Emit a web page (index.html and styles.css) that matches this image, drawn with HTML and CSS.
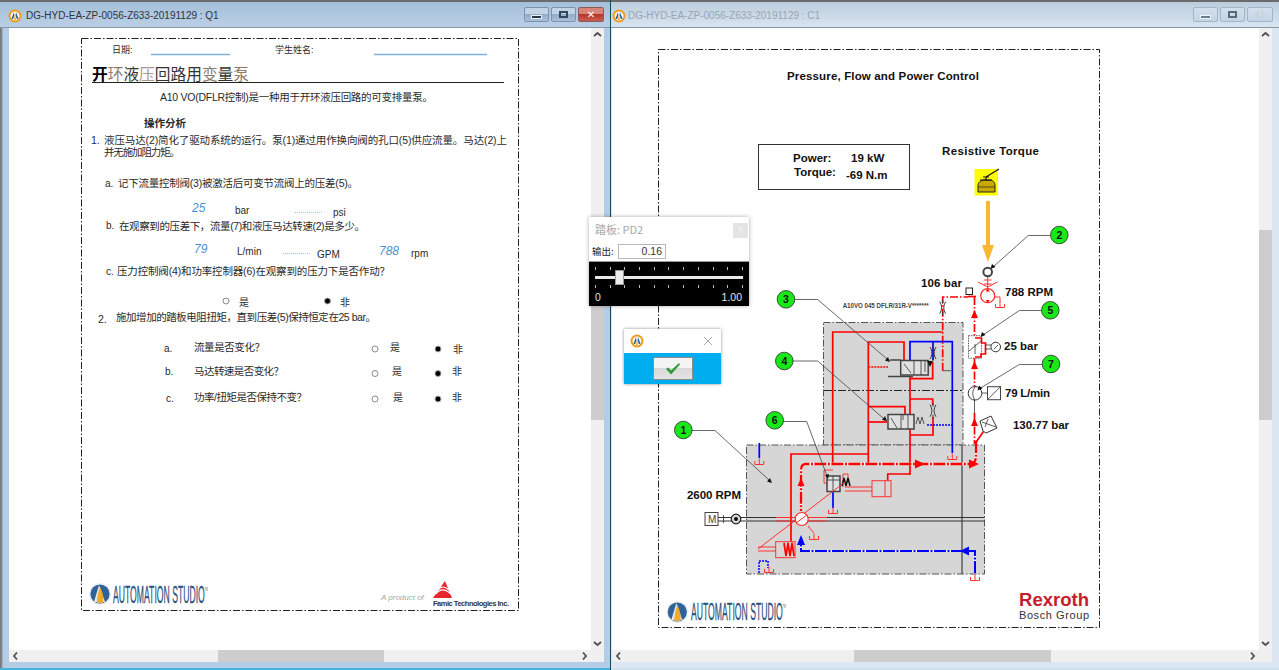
FILE: index.html
```html
<!DOCTYPE html>
<html lang="zh">
<head>
<meta charset="utf-8">
<title>Automation Studio</title>
<link rel="stylesheet" href="styles.css">
</head>
<body>
<svg class="defs" width="0" height="0" aria-hidden="true">
  <defs>
    <g id="app-icon">
      <circle r="5.5" class="ai-ring"/>
      <path d="M-1 -4 L-3.6 3 H-1.8 L-.6 -.5 Z" class="ai-blue"/>
      <path d="M1 -4 L3.6 3 H1.8 L.6 -.5 Z" class="ai-blue"/>
      <path d="M0 -2 L1 4 H-1 Z" class="ai-gold"/>
    </g>
    <g id="as-mark">
      <circle r="11" class="am-halo"/>
      <circle r="9.6" class="am-blue"/>
      <path d="M-1 -9 L-6 8 H-2.4 L-.4 1 L1.2 8 H5 Z" class="am-white"/>
      <path d="M0 -7 C3 -1 4 4 3 9 H-3 C-3 4 -2 -1 0 -7 Z" class="am-gold"/>
    </g>
    <path id="tank" d="M-4.5 0V3.5H4.5V0M0 -2.5V3.5" class="tank"/>
    <g id="orifice" class="orif"><path d="M-3 -6 C-.5 -2 -.5 2 -3 6M3 -6 C.5 -2 .5 2 3 6M0 -4V-8M0 4V8"/></g>
    <g id="up" class="arrow-red"><path d="M0 -5 L3.5 3 H-3.5 Z"/></g>
  </defs>
</svg>

<main class="desktop">
  <section class="window window-active">
    <header class="titlebar">
      <svg class="app-icon" width="14" height="14" viewBox="-7 -7 14 14"><use href="#app-icon"/></svg>
      <h1 class="title">DG-HYD-EA-ZP-0056-Z633-20191129 : Q1</h1>
      <div class="caption">
        <button class="cap cap-min" aria-label="最小化"><i></i></button>
        <button class="cap cap-max" aria-label="最大化"><i></i></button>
        <button class="cap cap-close" aria-label="关闭">✕</button>
      </div>
    </header>
    <div class="client">
      <div class="canvas">
        <svg width="582" height="622" viewBox="9 28 582 622">
          <rect x="81.5" y="38.5" width="437" height="572" class="sheet-edge"/>
          <text x="112" y="53" class="t9">日期:</text>
          <line x1="151" y1="54.5" x2="230" y2="54.5" class="blank"/>
          <text x="275" y="53" class="t9">学生姓名:</text>
          <line x1="374" y1="54.5" x2="487" y2="54.5" class="blank"/>
          <text x="92" y="80" class="doc-title" textLength="157"><tspan class="c1">开</tspan><tspan class="c2">环</tspan><tspan class="c3">液</tspan><tspan class="c4">压</tspan><tspan class="c3">回路用</tspan><tspan class="c2">变</tspan><tspan class="c3">量</tspan><tspan class="c2">泵</tspan></text>
          <line x1="92" y1="82.5" x2="504" y2="82.5" class="rule"/>
          <text x="160" y="101" class="t11" textLength="273">A10 VO(DFLR控制)是一种用于开环液压回路的可变排量泵。</text>
          <text x="144" y="127" class="t-bold" textLength="42">操作分析</text>
          <text x="91" y="144" class="t11 navy">1.</text>
          <text x="104" y="144" class="t11" textLength="403">液压马达(2)简化了驱动系统的运行。泵(1)通过用作换向阀的孔口(5)供应流量。马达(2)上</text>
          <text x="104" y="156" class="t11" textLength="76">并无施加阻力矩。</text>
          <text x="105" y="187" class="t10">a.</text>
          <text x="118" y="187" class="t11" textLength="240">记下流量控制阀(3)被激活后可变节流阀上的压差(5)。</text>
          <text x="192" y="212" class="answer">25</text>
          <text x="235" y="214" class="t10">bar</text>
          <line x1="295" y1="212.5" x2="322" y2="212.5" class="dots"/>
          <text x="333" y="216" class="t10">psi</text>
          <text x="106" y="229" class="t10">b.</text>
          <text x="119" y="230" class="t11" textLength="246">在观察到的压差下，流量(7)和液压马达转速(2)是多少。</text>
          <text x="194" y="253" class="answer">79</text>
          <text x="237" y="255" class="t10">L/min</text>
          <line x1="283" y1="253.5" x2="310" y2="253.5" class="dots"/>
          <text x="317" y="258" class="t10">GPM</text>
          <text x="379" y="255" class="answer">788</text>
          <text x="411" y="257" class="t10">rpm</text>
          <text x="106" y="275" class="t10">c.</text>
          <text x="117" y="275" class="t11" textLength="273">压力控制阀(4)和功率控制器(6)在观察到的压力下是否作动？</text>
          <circle cx="226" cy="301" r="3" class="radio"/>
          <text x="239" y="306" class="t10">是</text>
          <circle cx="327.500" cy="301" r="3" class="radio-on"/>
          <text x="340" y="306" class="t10">非</text>
          <text x="98" y="323" class="t11">2.</text>
          <text x="116" y="321" class="t11" textLength="260">施加增加的踏板电阻扭矩，直到压差(5)保持恒定在25 bar。</text>
          <text x="164" y="352" class="t10">a.</text>
          <text x="194" y="351" class="t11" textLength="71">流量是否变化？</text>
          <circle cx="375" cy="349" r="3" class="radio"/>
          <text x="390" y="351" class="t10">是</text>
          <circle cx="438" cy="349" r="3" class="radio-on"/>
          <text x="453" y="353" class="t10">非</text>
          <text x="165" y="375" class="t10">b.</text>
          <text x="194" y="375" class="t11" textLength="90">马达转速是否变化？</text>
          <circle cx="375" cy="373.500" r="3" class="radio"/>
          <text x="392" y="375" class="t10">是</text>
          <circle cx="438" cy="373.500" r="3" class="radio-on"/>
          <text x="452" y="375" class="t10">非</text>
          <text x="166" y="402" class="t10">c.</text>
          <text x="194" y="401" class="t11" textLength="113">功率/扭矩是否保持不变？</text>
          <circle cx="375" cy="399" r="3" class="radio"/>
          <text x="393" y="401" class="t10">是</text>
          <circle cx="438" cy="399" r="3" class="radio-on"/>
          <text x="452" y="401" class="t10">非</text>
          <use href="#as-mark" x="100" y="594"/>
          <text x="113" y="603" class="as-word" textLength="95" lengthAdjust="spacingAndGlyphs">AUTOMATION STUDIO<tspan class="tm" dy="-12">TM</tspan></text>
          <text x="381" y="600" class="product">A product of</text>
          <path d="M445 581 L452 598 H433 Z" class="famic"/>
          <path d="M436 594 C440 588 446 589 451 594M438 590 C441 586 445 586 449 590" class="famic-cut"/>
          <text x="433" y="606" class="famic-word" textLength="76">Famic Technologies Inc.</text>
        </svg>
      </div>
      <div class="vscroll">
        <svg class="chev" width="13" height="13" viewBox="0 0 13 13"><path d="M3 8 L6.500 5 L10 8"/></svg>
        <div class="vtrack"><div class="vthumb vthumb-left"></div></div>
        <svg class="chev" width="13" height="13" viewBox="0 0 13 13"><path d="M3 5 L6.500 8 L10 5"/></svg>
      </div>
      <div class="hscroll">
        <svg class="chev" width="13" height="12" viewBox="0 0 13 12"><path d="M8 2.500 L5 6 L8 9.500"/></svg>
        <div class="htrack"><div class="hthumb hthumb-left"></div></div>
        <svg class="chev" width="13" height="12" viewBox="0 0 13 12"><path d="M5 2.500 L8 6 L5 9.500"/></svg>
      </div>
      <div class="corner"></div>
    </div>
  </section>

  <section class="window window-idle">
    <header class="titlebar">
      <svg class="app-icon" width="14" height="14" viewBox="-7 -7 14 14"><use href="#app-icon"/></svg>
      <h1 class="title">DG-HYD-EA-ZP-0056-Z633-20191129 : C1</h1>
      <div class="caption">
        <button class="cap cap-min" aria-label="最小化"><i></i></button>
        <button class="cap cap-max" aria-label="最大化"><i></i></button>
        <button class="cap cap-close" aria-label="关闭">✕</button>
      </div>
    </header>
    <div class="client">
      <div class="canvas">
        <svg width="647" height="622" viewBox="612 28 647 622">
          <rect x="658.500" y="49.500" width="441" height="578" class="sheet-edge"/>
          <text x="787" y="80" class="h-title" textLength="192">Pressure, Flow and Power Control</text>
          <rect x="758.500" y="144.500" width="151" height="45" class="info"/>
          <text x="793" y="162" class="lbl">Power:</text>
          <text x="851" y="162" class="lbl">19 kW</text>
          <text x="794" y="176" class="lbl">Torque:</text>
          <text x="846" y="179" class="lbl">-69 N.m</text>
          <text x="942" y="155" class="lbl" textLength="97">Resistive Torque</text>
          <!-- resistive torque actuator -->
          <rect x="974.500" y="169" width="23.500" height="26.500" class="yellow"/>
          <path d="M978 192 V186 C978 182 981 180 985 180 H989 C993 180 995 182 995 186 V192 Z" class="hull"/>
          <path d="M978 187 H995" class="thin-k"/>
          <path d="M980 180 H992M986 180 V177M983 177 H989M986 177 L999 169" class="lever"/>
          <!-- load arrow -->
          <path d="M986 201 H990 V245 H994 L988 262 L982 245 H986 Z" class="load"/>

          <!-- housings -->
          <rect x="823.500" y="322.500" width="139.500" height="122.500" class="block"/>
          <rect x="746.500" y="445" width="238" height="129" class="block"/>
          <line x1="824" y1="390.500" x2="963" y2="390.500" class="pilot"/>
          <line x1="962" y1="445" x2="962" y2="574" class="bar"/>
          <path d="M718 517.500 H984.500M718 521 H984.500" class="shaft"/>

          <!-- pressure lines -->
          <path d="M832.700 463 V332 H942.700" class="r2"/>
          <path d="M868.300 463 V342 H904 V360" class="r2"/>
          <path d="M868.300 406.700 H905 V414" class="r2"/>
          <path d="M868.300 422 H887" class="r2"/>
          <path d="M868.300 367 H888" class="r-dash"/>
          <path d="M910 475 V377" class="r2"/>
          <path d="M910 378.700 H932.700 V362" class="r2"/>
          <path d="M910 399 H932.700 V405" class="r2"/>
          <path d="M910 435 H933 V417" class="r2"/>
          <path d="M887.700 481 V474 H910" class="r2"/>
          <path d="M791 541.700 V454 H869" class="r2"/>
          <path d="M942.700 370.700 V297 H968" class="r-long"/>
          <path d="M942.700 370.700 H951" class="thin-k"/>
          <path d="M976 441 V453 C976 461 975 464 970 464 H806 C802 464 801 466 801 470 V511" class="r-main-under"/>
          <path d="M976 441 V453 C976 461 975 464 970 464 H806 C802 464 801 466 801 470 V511" class="r-main"/>
          <path d="M974.500 297 V336M974.500 358 V386" class="r-long"/>
          <path d="M974.500 413 V444" class="r-long"/>
          <path d="M974.500 400 V413" class="thin-k"/>
          <path d="M968 296.500 H976" class="r2"/>

          <!-- return lines -->
          <path d="M910 360 V341.700 H952.300 V453" class="b2"/>
          <path d="M933 360 V341.700" class="b2"/>
          <path d="M927 425 H952" class="b-dash"/>
          <path d="M833 491.700 V508" class="b2"/>
          <path d="M759.300 443 V458" class="b2"/>
          <path d="M759 573 V561 H768 V568" class="b-dash"/>
          <path d="M975 573 V551 H801 V537" class="b-main-under"/>
          <path d="M975 573 V551 H801 V537" class="b-main"/>

          <!-- tanks -->
          <use href="#tank" x="952.300" y="456"/>
          <use href="#tank" x="759.300" y="461"/>
          <use href="#tank" x="833" y="510"/>
          <use href="#tank" x="814" y="536"/>
          <use href="#tank" x="769" y="569"/>
          <use href="#tank" x="975" y="577"/>

          <!-- arrows on lines -->
          <path d="M925 464 L915 459.500 V468.500 Z" class="fill-red"/>
          <path d="M979 464 L969 459.500 V468.500 Z" class="fill-red"/>
          <use href="#up" x="801" y="483"/>
          <use href="#up" x="974.500" y="315"/>
          <use href="#up" x="974.500" y="366"/>
          <use href="#up" x="974.500" y="423"/>
          <path d="M801 535 L797 545 H805 Z" class="fill-blue"/>
          <path d="M960 551 L969 546.500 V555.500 Z" class="fill-blue"/>

          <!-- valve 3 -->
          <rect x="900.700" y="360.500" width="27.500" height="14.500" class="valve"/>
          <path d="M914 360.500 V375M921 360.500 V375M904 364 L911 373M925 361 V372" class="thin-k"/>
          <path d="M890 360 H901M888 376.500 H913" class="valve-rod"/>
          <path d="M927 361 L933 361 L930 367 Z" class="fill-k"/>
          <!-- valve 4 -->
          <rect x="888" y="414.500" width="26" height="14.500" class="valve"/>
          <path d="M901 414.500 V429M908 414.500 V429M891 418 L897 428M903 415 V420" class="thin-k"/>
          <path d="M916 424 L918 417 L920 424 L922 417 L924 424" class="thin-k"/>
          <!-- orifices -->
          <use href="#orifice" x="942.700" y="307.700"/>
          <use href="#orifice" x="933" y="353"/>
          <use href="#orifice" x="933" y="410.700"/>
          <!-- control 6 -->
          <path d="M833 470 H824 V483 H828" class="r1"/>
          <rect x="827" y="476" width="13" height="15.500" class="valve"/>
          <path d="M833 476 V491.500M827 480 H840" class="thin-k"/>
          <path d="M843 487 V474 H848 V482" class="r1"/>
          <path d="M842 486 L844 478 L846 486 L848 478 L850 486" class="thick-k"/>
          <!-- actuators -->
          <path d="M845 487 H872M845 491 H872" class="r1"/>
          <rect x="872" y="480.700" width="19" height="16" class="r-box"/>
          <path d="M885 480.700 V496.700" class="r1"/>
          <path d="M758 547 H776M758 551 H776" class="r1"/>
          <rect x="775.700" y="541.700" width="19.300" height="16" class="r-box"/>
          <path d="M784 543 L786 556 L788 543 L790 556 L792 543 L794 556" class="r2"/>
          <path d="M758 549 L845 482" class="r1"/>
          <!-- pump and drive -->
          <path d="M776 517.500 H827M776 521 H827" class="r1"/>
          <circle cx="801.700" cy="519" r="6.500" class="pump"/>
          <path d="M796 523 L807 515" class="r1"/>
          <path d="M808 526 L814 533" class="r1"/>
          <rect x="705" y="512.500" width="13" height="13" class="motor"/>
          <text x="708" y="523" class="m-letter">M</text>
          <circle cx="736" cy="519" r="4.800" class="coupling"/>
          <circle cx="736" cy="519" r="2" class="fill-k"/>
          <path d="M723.500 515 V523" class="thin-k"/>
          <!-- output motor -->
          <path d="M987.700 277 V289M984 280 H991.500M984 284 H991.500" class="r1"/>
          <path d="M978 282 L987.700 287 L997.500 282" class="r1"/>
          <circle cx="987.700" cy="295.700" r="7" class="pump"/>
          <path d="M987.700 288.500 l-2 3 h4 Z M987.700 303 l-2 -3 h4 Z" class="fill-red"/>
          <path d="M994.700 297 H1000 V302" class="r1"/>
          <use href="#tank" x="1000" y="304"/>
          <circle cx="987.700" cy="272" r="4.300" class="sensor"/>
          <rect x="966" y="288" width="6.500" height="6.500" class="small-box"/>
          <!-- flow sensor 7 -->
          <circle cx="975" cy="393.300" r="6.800" class="pump-k"/>
          <path d="M975 387 C972 391 972 396 975 400" class="thin-k"/>
          <path d="M982 393 H987.500" class="thin-k"/>
          <rect x="987.500" y="386.700" width="13" height="13" class="motor"/>
          <path d="M987.500 399.700 L1000.500 386.700" class="thin-k"/>
          <!-- pressure sensor 5 -->
          <rect x="968.500" y="335.700" width="13" height="22.500" class="dotted-box"/>
          <path d="M975 338 H981.500 V343 H985.500 V354 H981 V357 H975" class="r2"/>
          <path d="M969 351 L981 341M975 344 V354" class="thin-k"/>
          <path d="M985 345 H991M985 349 H991" class="thin-k"/>
          <circle cx="995.700" cy="347" r="4.800" class="pump-k"/>
          <path d="M994 349 L998 345" class="thin-k"/>
          <!-- load relief -->
          <path d="M983 431 L980 421 L991 416 L997 428 L986 433 Z" class="relief"/>
          <path d="M982 422 L996 427M988 419 L985 427" class="thin-k"/>
          <path d="M983.300 431.700 L975.500 443" class="r2"/>
          <!-- leaders -->
          <path d="M692 430.500 H715 L769 480" class="leader"/>
          <path d="M1050 235.500 H1028.300 L993 267" class="leader"/>
          <path d="M795 299.500 H817.700 L887 359" class="leader"/>
          <path d="M793 361 H817.700 L883 418" class="leader"/>
          <path d="M1041 310.500 H1019.300 L983 335" class="leader"/>
          <path d="M783 421.500 H806.700 L827 476" class="leader"/>
          <path d="M1042 364.500 H1019.300 L979 389" class="leader"/>
          <path d="M772 483 l-5 -1.500 l3 -3.500 Z M990.500 269 l1.500 -5 l3.500 3 Z M890 362 l-5 -1.500 l3 -3.500 Z M887 421 l-5 -1 l3 -4 Z M980.500 337 l1.500 -5 l3.500 3 Z M828 479 l-3 -4 l4 -1 Z M977.500 390.500 l1.500 -5 l3.500 3 Z" class="fill-k"/>

          <g class="bubble">
            <circle cx="683.300" cy="430" r="8.800"/><circle cx="1059.300" cy="235" r="8.800"/><circle cx="786" cy="299.300" r="8.800"/><circle cx="784.300" cy="361" r="8.800"/><circle cx="1050.300" cy="310.300" r="8.800"/><circle cx="774.700" cy="420.300" r="8.800"/><circle cx="1051" cy="364" r="8.800"/>
          </g>
          <text x="683.300" y="434" class="bub-n">1</text>
          <text x="1059.300" y="239" class="bub-n">2</text>
          <text x="786" y="303.300" class="bub-n">3</text>
          <text x="784.300" y="365" class="bub-n">4</text>
          <text x="1050.300" y="314.300" class="bub-n">5</text>
          <text x="774.700" y="424.300" class="bub-n">6</text>
          <text x="1051" y="368" class="bub-n">7</text>

          <text x="842.700" y="308" class="model" textLength="86" lengthAdjust="spacingAndGlyphs">A10VO 045 DFLR/31R-V*******</text>
          <text x="921" y="287" class="lbl" textLength="41">106 bar</text>
          <text x="1005" y="296" class="lbl" textLength="48">788 RPM</text>
          <text x="1004" y="350" class="lbl" textLength="34">25 bar</text>
          <text x="1005" y="397" class="lbl" textLength="45">79 L/min</text>
          <text x="1013" y="429" class="lbl" textLength="56">130.77 bar</text>
          <text x="687" y="499" class="lbl" textLength="54">2600 RPM</text>

          <use href="#as-mark" x="677.300" y="612"/>
          <text x="691" y="620" class="as-word" textLength="95" lengthAdjust="spacingAndGlyphs">AUTOMATION STUDIO<tspan class="tm" dy="-12">TM</tspan></text>
          <text x="1019" y="606" class="rexroth" textLength="70" lengthAdjust="spacingAndGlyphs">Rexroth</text>
          <text x="1019" y="619" class="bosch" textLength="70">Bosch Group</text>
        </svg>
      </div>
      <div class="vscroll">
        <svg class="chev" width="13" height="13" viewBox="0 0 13 13"><path d="M3 8 L6.500 5 L10 8"/></svg>
        <div class="vtrack"><div class="vthumb vthumb-right"></div></div>
        <svg class="chev" width="13" height="13" viewBox="0 0 13 13"><path d="M3 5 L6.500 8 L10 5"/></svg>
      </div>
      <div class="hscroll">
        <svg class="chev" width="13" height="12" viewBox="0 0 13 12"><path d="M8 2.500 L5 6 L8 9.500"/></svg>
        <div class="htrack"><div class="hthumb hthumb-right"></div></div>
        <svg class="chev" width="13" height="12" viewBox="0 0 13 12"><path d="M5 2.500 L8 6 L5 9.500"/></svg>
      </div>
      <div class="corner"></div>
    </div>
  </section>

  <aside class="pedal">
    <div class="pedal-head">
      <span class="pedal-title">踏板: PD2</span>
      <span class="pedal-close">x</span>
    </div>
    <div class="pedal-value">
      <label class="pedal-label">输出:</label>
      <output class="pedal-input">0.16</output>
    </div>
    <div class="pedal-slider">
      <div class="ticks"><i></i><i></i><i></i><i></i><i></i><i></i><i></i><i></i><i></i><i></i><i></i></div>
      <div class="track"><div class="thumb"></div></div>
      <div class="ticks"><i></i><i></i><i></i><i></i><i></i><i></i><i></i><i></i><i></i><i></i><i></i></div>
      <div class="scale"><span class="scale-min">0</span><span>1.00</span></div>
    </div>
  </aside>

  <aside class="confirm">
    <div class="confirm-head">
      <svg width="14" height="14" viewBox="-7 -7 14 14"><use href="#app-icon"/></svg>
      <svg class="confirm-x" width="10" height="10" viewBox="0 0 10 10"><path d="M1 1 L9 9M9 1 L1 9"/></svg>
    </div>
    <div class="confirm-body">
      <button class="ok" aria-label="确定">
        <svg width="16" height="13" viewBox="0 0 16 13"><path d="M1 7 L3.500 5.500 L6 8.500 L14 1 L15 2.500 L6 12.500 Z"/></svg>
      </button>
    </div>
  </aside>
</main>
</body>
</html>
```
FILE: styles.css
```css
* { box-sizing: border-box; }
html, body { margin: 0; height: 100%; overflow: hidden; background: #fff; }
.defs { position: absolute; }

.desktop {
  position: relative;
  display: flex;
  width: 1279px;
  height: 670px;
  font-family: "Liberation Sans", "Noto Sans CJK SC", sans-serif;
}

/* windows */
.window { display: flex; flex-direction: column; height: 670px; }
.window-active {
  width: 611px;
  padding: 0 6px 8px 9px;
  background: linear-gradient(90deg, #6f7478 0, #8d9298 2px, #b4cde6 3px) ;
  border-right: 1px solid #17465f;
  box-shadow: inset 0 -2px 0 #46b4d8;
}
.window-idle {
  width: 668px;
  padding: 0 7px 8px 1px;
  background: #dce7f3;
  box-shadow: inset 0 -2px 0 #cfe0ee;
}
.titlebar {
  display: flex;
  align-items: center;
  flex: none;
  height: 28px;
  border-top: 2px solid #6b6b6b;
  border-bottom: 1px solid #8796a6;
  padding-top: 2px;
}
.window-active .titlebar { margin: 0 -6px 0 -9px; padding-left: 8px; padding-right: 6px; background: linear-gradient(#a5bfda, #b9cfe5); }
.window-idle .titlebar { margin: 0 -7px 0 -1px; padding-left: 1px; padding-right: 6px; background: linear-gradient(#bccddd, #d8e5f1); }
.app-icon { flex: none; margin-right: 4px; }
.window-idle .app-icon { margin-right: 2px; }
.title { margin: 0; font: 400 10px "Liberation Sans", sans-serif; color: #2f343a; white-space: nowrap; flex: 1; }
.window-idle .title { color: #9aa4ae; }
.caption { display: flex; gap: 2px; flex: none; margin-top: -2px; }
.cap {
  display: flex; align-items: center; justify-content: center;
  width: 25px; height: 15px; padding: 0;
  border: 1px solid #7d93ab; border-radius: 2px;
  background: linear-gradient(#c2d3e5 45%, #94aeca 50%, #a9c1da);
  font: 700 10px "DejaVu Sans", sans-serif; color: #fff;
}
.cap i { display: block; background: #2b3a4a; border: 1px solid #eef; }
.cap-min i { width: 11px; height: 4px; margin-top: 4px; }
.cap-max i { width: 9px; height: 7px; background: transparent; border: 2px solid #33475c; }
.cap-close { width: 26px; background: linear-gradient(#d9847a 45%, #b8352a 50%, #c9604f); border-color: #8f5a5a; }
.window-idle .cap { border-color: #a3b5c8; background: linear-gradient(#d3dfeb, #c4d4e4); color: #eef3f8; text-shadow: 0 0 1px #62707e; }
.window-idle .cap-min i { border-color: #f2f6fa; background: #6b7c8e; }
.window-idle .cap-max i { border-color: #5a6a7b; }

.client {
  flex: 1;
  min-height: 0;
  display: grid;
  grid-template-columns: 1fr 13px;
  grid-template-rows: 622px 12px;
  background: #fff;
}
.canvas { overflow: hidden; background: #fff; }
.canvas svg { display: block; }

/* scrollbars */
.vscroll { display: flex; flex-direction: column; background: #f0f0f0; }
.hscroll { display: flex; background: #f0f0f0; }
.chev { flex: none; }
.chev path { fill: none; stroke: #505050; stroke-width: 1.800; }
.vtrack { flex: 1; }
.htrack { flex: 1; }
.vthumb { width: 13px; background: #cdcdcd; }
.vthumb-left { height: 190px; margin-top: 189px; }
.vthumb-right { height: 190px; margin-top: 189px; }
.hthumb { height: 12px; background: #cdcdcd; }
.hthumb-left { width: 166px; margin-left: 196px; }
.hthumb-right { width: 197px; margin-left: 229px; }
.corner { background: #f0f0f0; }

/* drawing: sheets */
.sheet-edge { fill: none; stroke: #222; stroke-width: 1; stroke-dasharray: 7 2 1.500 2; }
text { font-family: "Liberation Sans", "Noto Sans CJK SC", sans-serif; fill: #2a2a2a; }
.t9 { font-size: 9px; }
.t10 { font-size: 10px; }
.t11 { font-size: 10.500px; }
.t-bold { font-size: 10.500px; font-weight: 700; }
.navy { fill: #23285c; }
.doc-title { font-size: 15.700px; font-weight: 400; }
.c1 { fill: #000; font-weight: 700; }
.c2 { fill: #8e7a67; }
.c3 { fill: #333; }
.c4 { fill: #a8998a; }
.blank { stroke: #7fb3dc; stroke-width: 1.300; }
.rule { stroke: #222; stroke-width: 1; }
.dots { stroke: #9cc2e4; stroke-width: 1; stroke-dasharray: 1 1; }
.answer { font-size: 12px; font-style: italic; fill: #4a90d2; }
.radio { fill: #fff; stroke: #8a8a8a; stroke-width: 1; }
.radio-on { fill: #000; stroke: #aaa; stroke-width: 1; }

.as-word { font-size: 23px; fill: #2c5180; stroke: #2c5180; stroke-width: .3; }
.tm { font-size: 6px; fill: #666; stroke: none; }
.am-halo { fill: #eceff2; }
.am-blue { fill: #30629a; }
.am-white { fill: #dfe7ef; }
.am-gold { fill: #f0a928; }
.product { font-size: 8px; font-style: italic; fill: #a4a8ac; }
.famic { fill: #e8242f; }
.famic-cut { fill: none; stroke: #fff; stroke-width: 1.200; }
.famic-word { font-size: 7.500px; font-weight: 700; fill: #333; }
.ai-ring { fill: #fff; stroke: #f09a1a; stroke-width: 2; }
.ai-blue { fill: #2f5f94; }
.ai-gold { fill: #f0a928; }

/* drawing: circuit */
.h-title { font-size: 11.500px; font-weight: 700; fill: #111; }
.lbl { font-size: 11.500px; font-weight: 700; fill: #111; }
.info { fill: #fff; stroke: #333; stroke-width: 1; }
.yellow { fill: #ffff00; }
.hull { fill: #c9a900; stroke: #222; stroke-width: 1; }
.lever { fill: none; stroke: #111; stroke-width: 1.200; }
.load { fill: #fbb731; }
.block { fill: #d6d6d6; stroke: #555; stroke-width: 1; stroke-dasharray: 7 2 1.500 2; }
.pilot { stroke: #222; stroke-width: 1; stroke-dasharray: 8 2 2 2; }
.bar { stroke: #5c5c5c; stroke-width: 1.500; }
.shaft { fill: none; stroke: #333; stroke-width: 1; }
.r1 { fill: none; stroke: #ff3030; stroke-width: 1; }
.r2 { fill: none; stroke: #ff0000; stroke-width: 1.700; }
.r-dash { fill: none; stroke: #ff0000; stroke-width: 1.500; stroke-dasharray: 2 1; }
.r-long { fill: none; stroke: #ff0000; stroke-width: 1.700; stroke-dasharray: 8 2 1.500 2; }
.r-main { fill: none; stroke: #ff0000; stroke-width: 2.300; stroke-dasharray: 12 1.500 2 1.500; }
.r-main-under { fill: none; stroke: #fff; stroke-width: 2.300; }
.b2 { fill: none; stroke: #0000ff; stroke-width: 1.700; }
.b-dash { fill: none; stroke: #0000ff; stroke-width: 1.500; stroke-dasharray: 2 1; }
.b-main { fill: none; stroke: #0000ff; stroke-width: 2; stroke-dasharray: 12 1.500 2 1.500; }
.b-main-under { fill: none; stroke: #fff; stroke-width: 2; }
.tank { fill: none; stroke: #f33; stroke-width: 1; }
.fill-red, .arrow-red { fill: #ff0000; }
.fill-blue { fill: #0000ff; }
.fill-k { fill: #111; }
.thin-k { fill: none; stroke: #333; stroke-width: .800; }
.thick-k { fill: none; stroke: #111; stroke-width: 1.500; }
.orif { fill: none; stroke: #333; stroke-width: 1; }
.valve { fill: #e0e0e0; stroke: #444; stroke-width: 1.500; }
.valve-rod { fill: none; stroke: #444; stroke-width: 1.300; }
.r-box { fill: #d6d6d6; stroke: #ff3030; stroke-width: 1; }
.pump { fill: #fff; stroke: #ff2a2a; stroke-width: 1.200; }
.pump-k { fill: #fff; stroke: #333; stroke-width: 1; }
.motor { fill: #fff; stroke: #444; stroke-width: 1; }
.m-letter { font-size: 10px; fill: #444; }
.coupling { fill: #d6d6d6; stroke: #222; stroke-width: 1.200; }
.sensor { fill: #fff; stroke: #444; stroke-width: 2; }
.small-box { fill: #fff; stroke: #222; stroke-width: 1; }
.dotted-box { fill: #fff; stroke: #333; stroke-width: .800; stroke-dasharray: 1.500 1; }
.relief { fill: #fff; stroke: #333; stroke-width: 1; }
.leader { fill: none; stroke: #444; stroke-width: .800; }
.bubble circle { fill: #18e818; stroke: #2a2a2a; stroke-width: .800; }
.bub-n { font-size: 10.500px; font-weight: 700; text-anchor: middle; fill: #111; }
.model { font-size: 6.500px; font-weight: 700; fill: #444; }
.rexroth { font-size: 17.500px; font-weight: 700; fill: #c41e2e; }
.bosch { font-size: 11px; fill: #333; }

/* pedal dialog */
.pedal {
  position: absolute;
  left: 589px; top: 217px;
  width: 160px; height: 89px;
  background: #fff;
  box-shadow: 0 0 4px rgba(0, 0, 0, .35);
  display: flex;
  flex-direction: column;
}
.pedal-head { display: flex; justify-content: space-between; height: 24px; padding: 6px 1px 0 6px; }
.pedal-title { font-size: 11px; color: #a8a8a8; font-family: "Noto Sans CJK SC", sans-serif; line-height: 12px; }
.pedal-close { width: 15px; height: 15px; background: #e4e4e4; color: #f4f4f4; font-size: 10px; text-align: center; line-height: 14px; }
.pedal-value { display: flex; align-items: center; gap: 5px; height: 20px; padding: 0 0 0 3px; }
.pedal-label { font: 9.500px "Noto Sans CJK SC", sans-serif; color: #222; flex: none; width: 21px; white-space: nowrap; }
.pedal-input { width: 48px; height: 15px; border: 1px solid #b8b8b8; font-size: 10.500px; line-height: 13px; text-align: right; padding-right: 3px; color: #333; }
.pedal-slider { flex: 1; background: #000; padding: 5px 6px 0; border-top: 1px solid #999; margin-top: 0; }
.ticks { display: flex; justify-content: space-between; height: 3px; }
.ticks i { width: 1px; height: 3px; background: #bbb; }
.track { position: relative; height: 3px; margin: 6px 0; background: #e8e8e8; }
.thumb { position: absolute; left: 20px; top: -6px; width: 9px; height: 15px; background: #ececec; border: 1px solid #999; }
.scale { display: flex; justify-content: space-between; color: #e8e8e8; font-size: 10.500px; line-height: 12px; margin-top: 3px; padding-right: 1px; }
.scale-min { color: #d0e4f7; }

/* confirm dialog */
.confirm {
  position: absolute;
  left: 624px; top: 329px;
  width: 97px; height: 55px;
  box-shadow: 0 0 3px rgba(0, 0, 0, .45);
  display: flex;
  flex-direction: column;
}
.confirm-head { display: flex; align-items: center; justify-content: space-between; height: 24px; background: #fff; padding: 0 8px 0 6px; }
.confirm-x path { fill: none; stroke: #aaa; stroke-width: 1; }
.confirm-body { flex: 1; background: #00aeef; display: flex; justify-content: center; align-items: center; }
.ok {
  display: flex; align-items: center; justify-content: center;
  width: 40px; height: 23px; padding: 0;
  border: 1px solid #8c8c8c;
  background: linear-gradient(#f4f4f4 45%, #d8d8d8 50%, #e4e4e4);
}
.ok path { fill: #2f9b3a; }
```
